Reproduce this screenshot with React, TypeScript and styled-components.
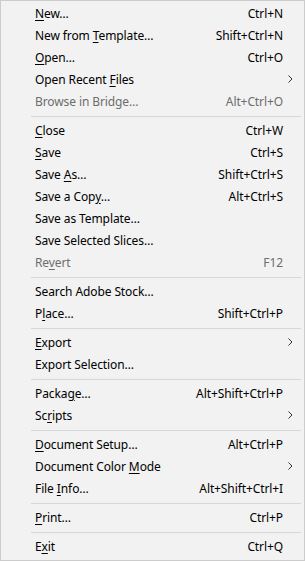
import React from "react";
import styled, { createGlobalStyle } from "styled-components";

const Global = createGlobalStyle`
  html, body { margin: 0; padding: 0; background: #f2f2f2; }
  body { font-family: "Noto Sans", "Liberation Sans", sans-serif; }
`;

const Menu = styled.div`
  width: 305px;
  height: 561px;
  box-sizing: border-box;
  border: 1px solid #cccccc;
  background: #f2f2f2;
  padding: 2px 0;
  display: flex;
  flex-direction: column;
  font-family: "Noto Sans", "Liberation Sans", sans-serif;
  font-size: 12px;
  letter-spacing: -0.1px;
`;

const Row = styled.div<{ $disabled?: boolean }>`
  height: 22px;
  flex: none;
  box-sizing: border-box;
  display: flex;
  align-items: center;
  padding: 0 0 2px 34px;
  color: ${(p) => (p.$disabled ? "#6d6d6d" : "#000000")};
  white-space: nowrap;
`;

const Label = styled.span`
  flex: 1;
`;

const Shortcut = styled.span`
  text-align: right;
`;

const ArrowCell = styled.span`
  width: 21px;
  flex: none;
  display: flex;
  align-items: center;
  justify-content: flex-start;
  padding-left: 5px;
  box-sizing: border-box;
`;

const Sep = styled.div`
  height: 7px;
  flex: none;
  display: flex;
  align-items: center;
  padding: 0 3px 0 30px;
  &::after {
    content: "";
    flex: 1;
    height: 1px;
    background: #d7d7d7;
  }
`;

const U = styled.span`
  text-decoration: underline;
  text-underline-offset: 2px;
`;

const Chevron = () => (
  <svg width="5" height="8" viewBox="0 0 5 8">
    <path d="M0.5 0.5 L4 4 L0.5 7.5" fill="none" stroke="#333" strokeWidth="1" />
  </svg>
);

type Item = {
  pre?: string;
  u?: string;
  post?: string;
  sc?: string;
  sub?: boolean;
  dis?: boolean;
};

const groups: Item[][] = [
  [
    { u: "N", post: "ew…", sc: "Ctrl+N" },
    { pre: "New from ", u: "T", post: "emplate…", sc: "Shift+Ctrl+N" },
    { u: "O", post: "pen…", sc: "Ctrl+O" },
    { pre: "Open Recent ", u: "F", post: "iles", sub: true },
    { pre: "Browse in Bridge…", sc: "Alt+Ctrl+O", dis: true },
  ],
  [
    { u: "C", post: "lose", sc: "Ctrl+W" },
    { u: "S", post: "ave", sc: "Ctrl+S" },
    { pre: "Save ", u: "A", post: "s…", sc: "Shift+Ctrl+S" },
    { pre: "Save a Cop", u: "y", post: "…", sc: "Alt+Ctrl+S" },
    { pre: "Save as Template…" },
    { pre: "Save Selected Slices…" },
    { pre: "Re", u: "v", post: "ert", sc: "F12", dis: true },
  ],
  [
    { pre: "Search Adobe Stock…" },
    { pre: "P", u: "l", post: "ace…", sc: "Shift+Ctrl+P" },
  ],
  [
    { u: "E", post: "xport", sub: true },
    { pre: "Export Selection…" },
  ],
  [
    { pre: "Packa", u: "g", post: "e…", sc: "Alt+Shift+Ctrl+P" },
    { pre: "Sc", u: "r", post: "ipts", sub: true },
  ],
  [
    { u: "D", post: "ocument Setup…", sc: "Alt+Ctrl+P" },
    { pre: "Document Color ", u: "M", post: "ode", sub: true },
    { pre: "File ", u: "I", post: "nfo…", sc: "Alt+Shift+Ctrl+I" },
  ],
  [{ u: "P", post: "rint…", sc: "Ctrl+P" }],
  [{ pre: "E", u: "x", post: "it", sc: "Ctrl+Q" }],
];

export default function App() {
  return (
    <>
      <Global />
      <Menu>
        {groups.map((g, gi) => (
          <React.Fragment key={gi}>
            {gi > 0 && <Sep />}
            {g.map((it, i) => (
              <Row key={i} $disabled={it.dis}>
                <Label>
                  {it.pre}
                  {it.u && <U>{it.u}</U>}
                  {it.post}
                </Label>
                {it.sc && <Shortcut>{it.sc}</Shortcut>}
                <ArrowCell>{it.sub && <Chevron />}</ArrowCell>
              </Row>
            ))}
          </React.Fragment>
        ))}
      </Menu>
    </>
  );
}
